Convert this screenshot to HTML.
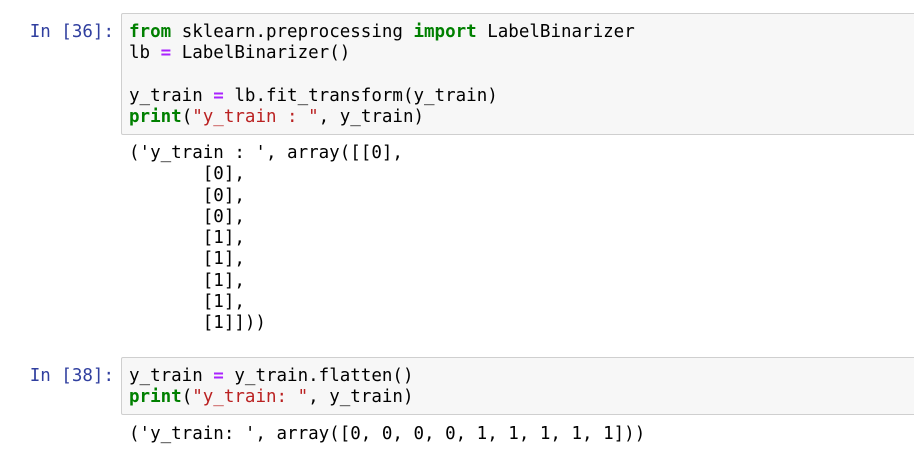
<!DOCTYPE html><html><head><style>
body{margin:0;background:#fff;width:914px;height:451px;overflow:hidden;position:relative;font-family:"DejaVu Sans Mono","Liberation Mono",monospace;font-size:17.5px;}
pre{margin:0;font:inherit;line-height:21.25px;position:absolute;white-space:pre;color:#000}
.box{position:absolute;left:121px;width:800px;background:#f7f7f7;border:1px solid #cfcfcf;border-radius:2px;}
.p{position:absolute;color:#303f9f;right:800px;line-height:21px}
.k{color:#008000;font-weight:bold}.o{color:#aa22ff;font-weight:bold}.s{color:#ba2121}
</style></head><body>
<div class="box" style="top:13px;height:120px"></div>
<div class="p" style="top:22px">In&nbsp;[36]:</div>
<pre style="left:129px;top:22px"><span class="k">from</span> sklearn.preprocessing <span class="k">import</span> LabelBinarizer
lb <span class="o">=</span> LabelBinarizer()

y_train <span class="o">=</span> lb.fit_transform(y_train)
<span class="k">print</span>(<span class="s">"y_train : "</span>, y_train)</pre>
<pre style="left:129px;top:143px">('y_train : ', array([[0],
       [0],
       [0],
       [0],
       [1],
       [1],
       [1],
       [1],
       [1]]))</pre>
<div class="box" style="top:357px;height:56px"></div>
<div class="p" style="top:366px">In&nbsp;[38]:</div>
<pre style="left:129px;top:366px">y_train <span class="o">=</span> y_train.flatten()
<span class="k">print</span>(<span class="s">"y_train: "</span>, y_train)</pre>
<pre style="left:129px;top:424px">('y_train: ', array([0, 0, 0, 0, 1, 1, 1, 1, 1]))</pre>
</body></html>
